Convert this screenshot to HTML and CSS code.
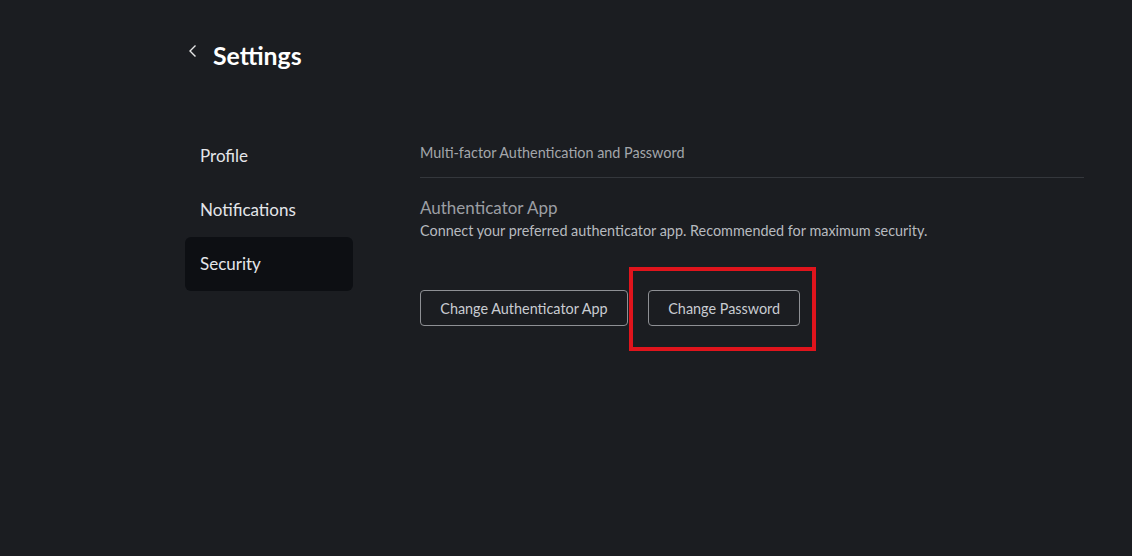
FILE: index.html
```html
<!DOCTYPE html>
<html>
<head>
  <title>Settings</title>
  <link rel="stylesheet" href="styles.css">
</head>
<body>
  <div class="page">
    <header class="page-header">
      <a class="back" href="#">
        <svg width="10" height="14" viewBox="0 0 10 14"><path d="M7.5 1.5 L2 7 L7.5 12.5" fill="none" stroke="#e6e6e6" stroke-width="1.4"/></svg>
      </a>
      <h1>Settings</h1>
    </header>

    <div class="layout">
      <nav class="sidebar">
        <a class="nav-item" href="#">Profile</a>
        <a class="nav-item" href="#">Notifications</a>
        <a class="nav-item active" href="#">Security</a>
      </nav>

      <section class="content">
        <div class="section-title">Multi-factor Authentication and Password</div>
        <h2>Authenticator App</h2>
        <p class="description">Connect your preferred authenticator app. Recommended for maximum security.</p>
        <div class="actions">
          <button>Change Authenticator App</button>
          <div class="highlight">
            <button>Change Password</button>
          </div>
        </div>
      </section>
    </div>
  </div>
</body>
</html>
```

FILE: styles.css
```css
body {
  font-family: Lato, "Open Sans", sans-serif;
  background-color: #1b1d21;
  margin: 0;
  padding: 0;
}

.page {
  padding: 38px 0 0 185px;
  min-height: 100vh;
  box-sizing: border-box;
}

.page-header {
  display: flex;
  align-items: center;
  height: 34px;
}

.back {
  display: flex;
  width: 25px;
  padding-left: 3px;
  margin-top: -9px;
}

h1 {
  margin: 0;
  color: #ffffff;
  font-size: 24.8px;
  font-weight: bold;
}

.layout {
  display: flex;
  margin-top: 57px;
}

.sidebar {
  width: 168px;
  display: flex;
  flex-direction: column;
}

.nav-item {
  display: block;
  height: 54px;
  line-height: 53px;
  padding-left: 15px;
  color: #e4e6ea;
  font-size: 17px;
  text-decoration: none;
  border-radius: 6px;
}

.nav-item.active {
  background-color: #0d0f13;
}

.content {
  margin-left: 67px;
  width: 664px;
  padding-top: 15px;
}

.section-title {
  color: #a3a6ab;
  font-size: 14.4px;
  padding-bottom: 16px;
  border-bottom: 1px solid #34373c;
}

h2 {
  margin: 19px 0 0;
  color: #9c9fa4;
  font-size: 17px;
  font-weight: normal;
  line-height: 22px;
}

.description {
  margin: 3px 0 0;
  color: #b7babf;
  font-size: 14.4px;
  line-height: 18px;
}

.actions {
  display: flex;
  align-items: center;
  gap: 20px;
  margin-top: 50px;
}

button {
  background-color: transparent;
  color: #c9ccd1;
  font-family: Lato, "Open Sans", sans-serif;
  font-size: 14.4px;
  height: 36px;
  padding: 0 19.3px;
  border: 1px solid #8e9094;
  border-radius: 4px;
  cursor: pointer;
}

/* red annotation frame round the password button */
.highlight {
  display: flex;
  padding: 19px 12px 21px 15px;
  margin: -23px -16px -25px -19px;
  border: 4px solid #e0141c;
}
```
